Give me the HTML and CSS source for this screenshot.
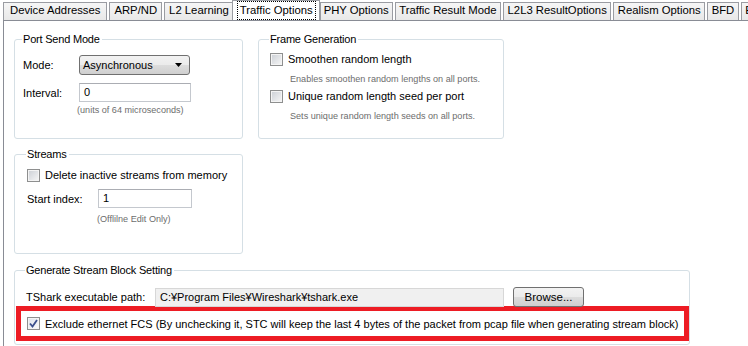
FILE: index.html
```html
<!DOCTYPE html>
<html lang="en">
  <head>
    <meta charset="UTF-8" />
    <title>Traffic Options</title>
    <link rel="stylesheet" href="styles.css">
  </head>
  <body>
    <div class="tabs">
      <div class="tab">Device Addresses</div>
      <div class="tab">ARP/ND</div>
      <div class="tab">L2 Learning</div>
      <div class="tab active"><span class="focus">Traffic Options</span></div>
      <div class="tab">PHY Options</div>
      <div class="tab">Traffic Result Mode</div>
      <div class="tab">L2L3 ResultOptions</div>
      <div class="tab">Realism Options</div>
      <div class="tab">BFD</div>
      <div class="tab">E</div>
    </div>

    <div class="panel">
      <div class="row">
        <fieldset class="group port-mode">
          <legend>Port Send Mode</legend>
          <div class="field">
            <label>Mode:</label>
            <div class="select">
              <span>Asynchronous</span>
              <svg width="7" height="4" viewBox="0 0 7 4"><path d="M0 0h7L3.5 4z" fill="#000"/></svg>
            </div>
          </div>
          <div class="field">
            <label>Interval:</label>
            <div class="input">0</div>
          </div>
          <div class="hint hint-interval">(units of 64 microseconds)</div>
        </fieldset>

        <fieldset class="group frame-gen">
          <legend>Frame Generation</legend>
          <div class="check"><span class="box"></span>Smoothen random length</div>
          <div class="hint hint-check">Enables smoothen random lengths on all ports.</div>
          <div class="check"><span class="box"></span>Unique random length seed per port</div>
          <div class="hint hint-check">Sets unique random length seeds on all ports.</div>
        </fieldset>
      </div>

      <fieldset class="group streams">
        <legend>Streams</legend>
        <div class="check"><span class="box"></span>Delete inactive streams from memory</div>
        <div class="field">
          <label>Start index:</label>
          <div class="input">1</div>
        </div>
        <div class="hint hint-index">(Offlilne Edit Only)</div>
      </fieldset>

      <fieldset class="group stream-block">
        <legend>Generate Stream Block Setting</legend>
        <div class="field">
          <label>TShark executable path:</label>
          <div class="input readonly">C:¥Program Files¥Wireshark¥tshark.exe</div>
          <button class="browse">Browse...</button>
        </div>
        <div class="highlight">
          <div class="check">
            <span class="box checked">
              <svg width="9" height="9" viewBox="0 0 9 9"><path d="M1 4.5l2.5 3L8 1" fill="none" stroke="#3b4f8c" stroke-width="1.8"/></svg>
            </span>
            Exclude ethernet FCS (By unchecking it, STC will keep the last 4 bytes of the packet from pcap file when generating stream block)
          </div>
        </div>
      </fieldset>
    </div>
  </body>
</html>
```

FILE: styles.css
```css
* {
  margin: 0;
  padding: 0;
  box-sizing: border-box;
}

body {
  font-family: "Liberation Sans", Arial, sans-serif;
  font-size: 11px;
  color: #000;
  background: white;
  height: 100vh;
  overflow: hidden;
}

.tabs {
  display: flex;
  align-items: flex-end;
  height: 20px;
  padding-left: 3px;
  white-space: nowrap;
  overflow: hidden;
}

.tab {
  flex: none;
  height: 18px;
  line-height: 15px;
  padding: 0 4px;
  margin-right: 2px;
  border: 1px solid #9a9ca2;
  border-bottom: none;
  background: linear-gradient(#f6f6f6, #e8e8e8);
  font-size: 11.3px;
}

.tab:first-child {
  padding: 0 6px;
}

.tab.active {
  height: 21px;
  padding: 0 3px 0 4px;
  margin: 0 0 0 -4px;
  background: white;
  position: relative;
  top: 1px;
  z-index: 1;
}

.tab.active ~ .tab {
  padding: 0 3.5px;
}

.tab.active + .tab {
  padding: 0 3px;
}

.tab .focus {
  display: inline-block;
  line-height: 17px;
  padding: 0 2px;
  border: 1px dotted #000;
}

.panel {
  border-top: 1px solid #898c95;
  border-left: 1px solid #898c95;
  margin-left: 3px;
  padding: 12px 0 0 10px;
  height: 330px;
}

.row {
  display: flex;
  gap: 15px;
}

.group {
  border: 1px solid #d5dfe5;
  border-radius: 3px;
  padding: 0 8px;
  width: 229px;
  height: 106px;
}

.group legend {
  padding: 0 2px 0 1px;
  margin-left: -1px;
  line-height: 13px;
  font-size: 11px;
  letter-spacing: -0.2px;
}

.frame-gen {
  width: 246px;
  padding-left: 11px;
}

.streams {
  margin-top: 9px;
  padding-left: 12px;
}

.stream-block {
  width: 674px;
  height: 81px;
  margin-top: 10px;
  padding: 0 0 0 11px;
}

.field {
  display: flex;
  align-items: center;
}

.field label {
  width: 56px;
  flex: none;
}

.port-mode .field:first-of-type {
  margin-top: 9px;
}

.port-mode .field + .field {
  margin-top: 8px;
}

.select {
  width: 111px;
  height: 20px;
  display: flex;
  align-items: center;
  justify-content: space-between;
  padding: 0 7px 0 3px;
  border: 1px solid #707070;
  border-radius: 3px;
  background: linear-gradient(#f2f2f2 0%, #ebebeb 50%, #dddddd 50%, #cfcfcf 100%);
}

.input {
  width: 112px;
  height: 19px;
  line-height: 17px;
  padding: 0 4px;
  border: 1px solid #c4c8ce;
  border-top-color: #abadb3;
  background: white;
}

.hint {
  color: #6d6d6d;
  font-size: 9.1px;
  line-height: 12px;
}

.hint-interval {
  margin: 2px 0 0 54px;
}

.check {
  display: flex;
  align-items: center;
  height: 14px;
  white-space: nowrap;
}

.box {
  width: 13px;
  height: 13px;
  flex: none;
  margin-right: 5px;
  border: 1px solid #8e8f8f;
  background: linear-gradient(135deg, #cbcfd5, #f7f7f7);
  box-shadow: inset 0 0 0 1px #f4f4f4;
  display: flex;
  align-items: center;
  justify-content: center;
}

.box.checked {
  background: linear-gradient(135deg, #dde2ec, #fbfbfb);
}

.frame-gen .check {
  margin-top: 6px;
}

.frame-gen .check + .hint {
  margin: 7px 0 0 20px;
}

.frame-gen .hint + .check {
  margin-top: 4px;
}

.streams .check {
  margin-top: 7px;
}

.streams .field {
  margin-top: 7px;
}

.streams .field label {
  width: 71px;
}

.streams .input {
  width: 94px;
}

.hint-index {
  margin: 5px 0 0 70px;
}

.stream-block .field {
  margin-top: 10px;
}

.stream-block .field label {
  width: 129px;
}

.input.readonly {
  width: 349px;
  background: #f0f0f0;
  border-color: #d7d7d7;
}

.browse {
  width: 71px;
  height: 20px;
  margin-left: 9px;
  font-family: inherit;
  font-size: 11.5px;
  border: 1px solid #707070;
  border-radius: 3px;
  background: linear-gradient(#f2f2f2 0%, #ebebeb 50%, #dddddd 50%, #cfcfcf 100%);
}

.highlight {
  margin: -1px 0 0 -10px;
  width: 673px;
  height: 35px;
  border: 5px solid #ed1c24;
  display: flex;
  align-items: center;
  padding-left: 6px;
}
```
